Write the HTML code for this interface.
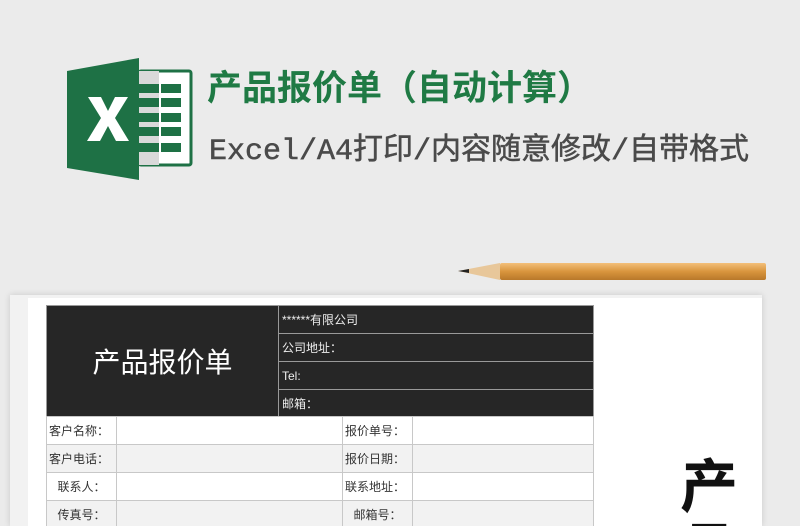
<!DOCTYPE html>
<html style="overflow:hidden;width:800px;height:526px"><head><meta charset="utf-8"><style>
body{margin:0;width:800px;height:526px;background:#ebebeb;overflow:hidden;position:relative;font-family:"Liberation Sans","Noto Sans CJK SC",sans-serif}
.abs{position:absolute}
.t1{left:207px;top:67px;font-size:35px;font-weight:bold;color:#1f7a44;white-space:nowrap;line-height:44px}
.t2{left:209px;top:132px;font-size:30px;color:#4a4a4a;font-family:"Liberation Mono","Noto Sans CJK SC",monospace;white-space:nowrap;line-height:40px;-webkit-text-stroke:0.5px #4a4a4a}
table{border-collapse:collapse;position:absolute;left:46px;top:305px;table-layout:fixed;width:547px}
td{padding:0;font-size:12px;color:#333;border:1px solid #c8c8c8;overflow:hidden;white-space:nowrap}
.blk td{background:#262626;color:#eee;border:1px solid #999}
</style></head><body>
<svg class="abs" style="left:60px;top:50px" width="140" height="140">
<rect x="79" y="21" width="52" height="94" fill="#fff" stroke="#1e7145" stroke-width="3" rx="2"/>
<rect x="79" y="21" width="20" height="94" fill="#d9d9d9"/>
<g fill="#1e7145">
<rect x="79" y="34" width="20" height="9"/><rect x="101" y="34" width="20" height="9"/>
<rect x="79" y="48" width="20" height="9"/><rect x="101" y="48" width="20" height="9"/>
<rect x="79" y="63" width="20" height="9"/><rect x="101" y="63" width="20" height="9"/>
<rect x="79" y="77" width="20" height="9"/><rect x="101" y="77" width="20" height="9"/>
<rect x="79" y="93" width="20" height="9"/><rect x="101" y="93" width="20" height="9"/>
</g>
<polygon points="7,21 79,8 79,130 7,118" fill="#1e7145"/>
<polygon points="28,47 41,47 48,61 55,47 68,47 55,68 69,91 56,91 48,76 40,91 27,91 41,68" fill="#fff"/>
</svg>
<div class="abs t1">产品报价单（自动计算）</div>
<div class="abs t2">Excel/A4打印/内容随意修改/自带格式</div>
<svg class="abs" style="left:455px;top:258px" width="315" height="30">
<defs><linearGradient id="w" x1="0" y1="0" x2="0" y2="1"><stop offset="0" stop-color="#f3c07a"/><stop offset=".5" stop-color="#d9953d"/><stop offset="1" stop-color="#b8782a"/></linearGradient></defs>
<rect x="45" y="5" width="266" height="17" fill="url(#w)" rx="2"/>
<polygon points="3,13 45,5 45,22" fill="#e8c79a"/>
<polygon points="3,13 14,11 14,15" fill="#222"/>
</svg>
<div class="abs" style="left:10px;top:295px;width:752px;height:231px;background:#f2f2f2;box-shadow:0 0 6px rgba(0,0,0,.15)"></div>
<div class="abs" style="left:28px;top:298px;width:734px;height:228px;background:#fff;overflow:hidden">
<div class="abs" style="left:652px;top:152px;font-size:58px;font-weight:bold;color:#111;font-family:'Noto Sans CJK SC',sans-serif;line-height:64px">产<br>品</div>
</div>
<table>
<colgroup><col style="width:232px"><col style="width:315px"></colgroup>
<tr class="blk" style="height:28px"><td rowspan="4" style="text-align:center;font-size:28px;color:#fff">产品报价单</td><td style="padding-left:3px">******有限公司</td></tr>
<tr class="blk" style="height:28px"><td style="padding-left:3px">公司地址：</td></tr>
<tr class="blk" style="height:28px"><td style="padding-left:3px">Tel:</td></tr>
<tr class="blk" style="height:27px"><td style="padding-left:3px">邮箱：</td></tr>
</table>
<table style="top:416px">
<colgroup><col style="width:70px"><col style="width:226px"><col style="width:70px"><col style="width:181px"></colgroup>
<tr style="height:28px"><td style="padding-left:2px">客户名称：</td><td></td><td style="padding-left:2px">报价单号：</td><td></td></tr>
<tr style="height:28px;background:#f2f2f2"><td style="padding-left:2px">客户电话：</td><td></td><td style="padding-left:2px">报价日期：</td><td></td></tr>
<tr style="height:28px"><td style="text-align:center">联系人：</td><td></td><td style="padding-left:2px">联系地址：</td><td></td></tr>
<tr style="height:27px;background:#f2f2f2"><td style="text-align:center">传真号：</td><td></td><td style="text-align:center">邮箱号：</td><td></td></tr>
</table>
</body></html>
